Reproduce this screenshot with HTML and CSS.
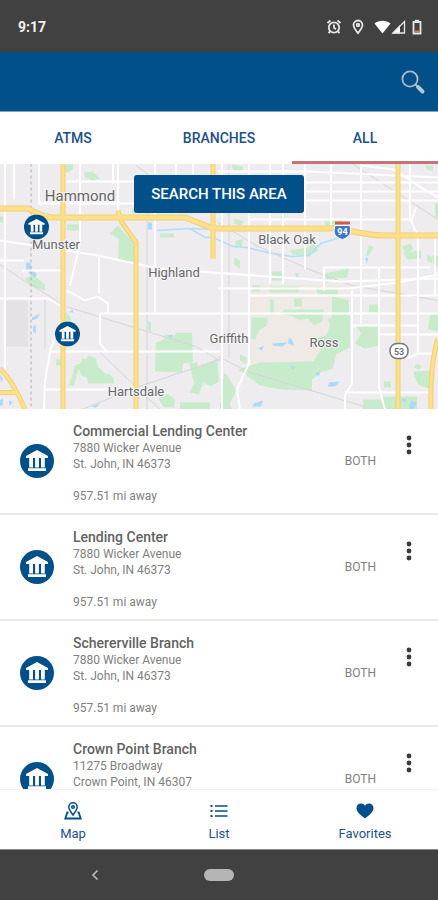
FILE: index.html
```html
<!DOCTYPE html>
<html lang="en">

<head>
  <meta charset="UTF-8" />
  <meta name="viewport" content="width=device-width, initial-scale=1.0" />
  <title>Locations</title>
  <link rel="stylesheet" href="styles.css">
</head>

<body>
  <svg class="symbols" aria-hidden="true">
    <symbol id="bank" viewBox="0 0 34 34">
      <circle cx="17" cy="17" r="17" fill="#02508a" />
      <path fill="#fff" d="M17 6L28 12v2H6v-2zM9.200 14h3.800v9.500H9.200zM15.100 14h3.800v9.500h-3.800zM21 14h3.800v9.500H21zM8 24.300h18v2.700H8z" />
    </symbol>
    <symbol id="dots" viewBox="0 0 6 20">
      <g fill="#3a3a3a"><circle cx="3" cy="3" r="2.400" /><circle cx="3" cy="10" r="2.400" /><circle cx="3" cy="17" r="2.400" /></g>
    </symbol>
  </svg>

  <div class="app">
    <div class="status-bar">
      <span class="time">9:17</span>
      <div class="status-icons">
        <svg class="alarm" width="16" height="16" viewBox="0 0 16 16" fill="none" stroke="#e6e6e6" stroke-width="1.800">
          <circle cx="8" cy="8.500" r="5.200" />
          <path d="M8 5.500v3.300l2 1.400M1.500 4l3-2.500M14.500 4l-3-2.500M4 12.500L2.500 14M12 12.500l1.500 1.500" />
        </svg>
        <svg class="place" width="12" height="16" viewBox="0 0 12 16" fill="none" stroke="#e6e6e6" stroke-width="1.800">
          <path d="M6 14.200C3.500 11 1.500 8.500 1.500 6a4.500 4.500 0 0 1 9 0c0 2.500-2 5-4.500 8.200z" />
          <circle cx="6" cy="6" r="1.300" />
        </svg>
        <svg width="17" height="16" viewBox="0 0 17 16"><path fill="#fff" d="M.500 4.500C5 .800 12 .800 16.500 4.500L8.500 14.500z" /></svg>
        <svg width="15" height="16" viewBox="0 0 15 16"><path fill="#fff" d="M9 6v8.500H.800z" /><path fill="none" stroke="#e6e6e6" stroke-width="1.300" d="M2 14L13.500 2.500V14z" /></svg>
        <svg class="battery" width="10" height="16" viewBox="0 0 10 16">
          <path fill="none" stroke="#e6e6e6" stroke-width="1.800" d="M1.500 3h7v11.500h-7z" />
          <path fill="#e6e6e6" d="M3 .800h4V3H3z" />
          <path fill="#d9804f" d="M3 11.500h4v2H3z" />
        </svg>
      </div>
    </div>

    <header class="header">
      <button class="search-btn" aria-label="Search">
        <svg width="26" height="26" viewBox="0 0 26 26" fill="none">
          <circle cx="10" cy="10" r="7.600" stroke="#a9bccb" stroke-width="1.800" />
          <path d="M15.500 15.500l3 3" stroke="#a9bccb" stroke-width="2" />
          <path d="M18.200 18.200l4.300 4.300" stroke="#b7c6d2" stroke-width="4" stroke-linecap="round" />
        </svg>
      </button>
    </header>

    <nav class="tabs">
      <a href="#atms">ATMS</a>
      <a href="#branches">BRANCHES</a>
      <a href="#all" class="active">ALL</a>
    </nav>

    <div class="map">
      <svg class="map-canvas" viewBox="0 163 438 246" preserveAspectRatio="xMidYMid slice">
        <rect y="163" width="438" height="246" fill="#eeecee" />
        <path fill="#e4e2e5" d="M6 300h22v46H6zM275 351h12v7h-12z" />
        <path fill="#efeae5" d="M251 284h98v60l-20 22h-78z" />

        <!-- parks -->
        <g fill="#c8eccb">
          <path d="M65 164h8v4l-4 4h-4zM84 172l9-1 7 7-8 2-7-3zM67 224h12v6h-12zM110 233l8-8 16 18v20l-16-4 1-20zM0 216h3v6H0zM132 208h4v5h-4zM160 233h14v4h-14z" />
          <path d="M25 278l8-4 12 10v6l-14-4zM66 311l5 6v5h-6zM56 359h6v6h-6zM69 385l6-20 7-3-5 12-3 11zM82 358l4 1 3-4 7 3 2 8 8 8 3-1 5 5v5H88l-1-6-6-2-2-8z" />
          <path d="M148 320l3 2v9l-3-2zM156 342l8-3 1-5 10 1 1-3h16l1 30-10 1-1 9-27-1zM189 363l8-1 1 5 19-9 2 23-8 5-8-4-4 12-9-2 4-10zM158 398l10-5 7 6-1 8h-10zM180 402h30v7h-30z" />
          <path d="M232 164l11 2v6l-10-2zM234 218l11 3-5 4-6-2zM234 257l6 3v8l-6-4zM236 240l7-2-1 8-7 2zM281 216l4-4v8h-5zM324 221l18-2v7h-16zM290 250l18-3 8-6 2 9-10 6-16-2zM272 271h12v9h-12zM295 272l4 1-2 7zM325 273l24-5-2 9-14 1-7 5zM369 244l5 3-6 9-2-1zM402 246l9-3 2 6-7 4zM403 252l18-2v8l-14 1zM435 203h3v14h-3zM425 165h8v6l-6-2zM427 254l5 3v6l-5-3zM432 255h6v12l-5-3z" />
          <path d="M269 286h30v6h-30zM252 285h8v6h-8zM315 287h23v7h-20zM270 298l4 2v14h-4zM294 298h8v8h-8zM252 317h16l-2 9-6 3-5 10h-4zM284 309h40l-2 12-8 4-6-7-9 2-6-4-11-2zM332 296l17 4v18h-17z" />
          <path d="M350 312v35l-14 7-3 14-12 4-9 7v11l-30-1-22-4-22-16 22-7 53-1 9-13-13-2 4-8 13-3 4-10-2-7 15-2zM369 304h10v9h-10zM356 325h24v20l-16 3-9-5 6-10zM430 315l8-4v20l-10-2zM224 372l4 4 8 14-8 17-8-9zM240 354l7 3-1 7-6-4zM384 381h7v6h-7zM417 363l5 3-3 3-5-2zM413 371l19-1-1 19-13-5zM363 399h20v-3h34v13h-54z" />
          <path d="M220 402l8-3 4 10h-12z" />
        </g>

        <!-- water -->
        <g fill="#a9d9fb">
          <path d="M148 222h4v7h-4zM26 262h4l1 6 6 6-2 3-9-7zM32 317l8-4-3 5-5 2zM33 326l3-2v9l-3-2zM69 312l4-3v3zM168 335l5-1-2 3zM0 374l3 4-2 4zM0 400l3-2v7H0zM9 400l4 2-4 3zM91 406l9-3-4 4zM258 348l6-3-2 5zM272 343l16-1-6 4-9-1zM289 337l3 2 2 6-6-2zM290 366h5l-2 3zM315 373l5-2-1 5zM329 382l11-1-5 5h-7zM254 403l9-3-2 6h-9zM365 257l3 1-1 5zM402 398h4v3h-4zM411 400l6 2-4 7h-4z" />
        </g>
        <path fill="none" stroke="#b5dcf8" stroke-width="1.500" d="M157 230l33-2 15 9h8l20 9 14 1 20 5 25 4 17-1 12-12 22-7M192 228l22 1" />

        <!-- railways and county line -->
        <path fill="none" stroke="#d6d4d7" stroke-width="1" d="M352 163l86 56M136 165l12 9-1 60v175M0 264l24 16 42 26 130 40 24 14M218 222l40 24 54 24 40 15 86 15M218 356l32 16 58 17 56 17M100 352l60 57M82 409l54-22 84-28M45 298v50M229 163v194" />
        <path fill="none" stroke="#aeacaf" stroke-width="1" stroke-dasharray="3 3" d="M31 163v246" />

        <!-- streets -->
        <g fill="none" stroke="#fff" stroke-width="2">
          <path d="M5 163v205M14 163v36M39 163v40h96M80 163v80l-10 42M118 163v48M63 181h72M0 240l40 6 58 9 60 13 110 8 74 5 96-3M0 260h24M22 270h40M99 255v38M155 163v150M176 163v50M193 163v14M0 298h48l12 7M67 290l18 10 13-4 10 7v10M438 313H100v30l7 8M50 351h170M63 314l-13 37-5 30-1 28M45 389h91M113 163v20" />
          <path d="M222 163v246M249 163v200l-12 26 3 20M270 163v120M283 163v120M305 163v106M331 163v68M361 163v160M218 171h90l130 6M304 182h134M304 191h134M304 200h134M249 219h164M324 290v-23h106M379 267v120l6 22M360 165l34 4 24 16 20 12M410 163v55l8 18v117l-8 4h-12M352 290v93l-7 12v14M435 235v60M250 295h188M218 288h130l50-6 40-8M352 325h66M380 334h58M345 392h85M412 219l4-12M418 353h16" />
        </g>

        <!-- highways -->
        <g fill="none" stroke="#f2cf72" stroke-width="5">
          <path d="M63 163v246M118 210l4 12 14 20v167M213 163v95M398 163v246M438 338q-8 24-7 71M0 368q14 14 25 41M0 392h15" />
          <path stroke-width="6" d="M0 208h28q12 7 24 9h133l28 11h127q28 7 45 7h53" />
        </g>
        <g fill="none" stroke="#fde08a" stroke-width="3">
          <path d="M63 163v246M118 210l4 12 14 20v167M213 163v95M398 163v246M438 338q-8 24-7 71M0 368q14 14 25 41M0 392h15" />
          <path stroke-width="4" d="M0 208h28q12 7 24 9h133l28 11h127q28 7 45 7h53" />
        </g>

        <!-- road shields -->
        <path fill="#3f78c4" stroke="#fff" stroke-width="1" d="M335 225h15q2 8-2 11-2 2-5.500 3-4-1-6-3-4-3-1.500-11z" />
        <path fill="#d4574e" d="M335 221h15v3h-15z" />
        <text class="shield shield-light" x="342.500" y="234">94</text>
        <rect x="390" y="343" width="18" height="15" rx="7" fill="#fff" stroke="#77787a" stroke-width="1.500" />
        <text class="shield" x="399" y="354">53</text>

        <g class="places">
          <text class="city" x="80" y="200">Hammond</text>
          <text x="56" y="248">Munster</text>
          <text x="174" y="276">Highland</text>
          <text x="287" y="243">Black Oak</text>
          <text x="229" y="342">Griffith</text>
          <text x="324" y="346">Ross</text>
          <text x="136" y="395">Hartsdale</text>
        </g>

        <use href="#bank" x="24" y="214" width="25" height="25" />
        <use href="#bank" x="55" y="321" width="25" height="25" />
      </svg>
      <button class="search-area">SEARCH THIS AREA</button>
    </div>

    <ul class="list">
      <li class="row">
        <svg class="bank-icon"><use href="#bank" /></svg>
        <div class="details">
          <h2>Commercial Lending Center</h2>
          <p>7880 Wicker Avenue</p>
          <p>St. John, IN 46373</p>
          <p class="distance">957.51 mi away</p>
        </div>
        <span class="type">BOTH</span>
        <button class="more" aria-label="More options"><svg width="6" height="20"><use href="#dots" /></svg></button>
      </li>
      <li class="row">
        <svg class="bank-icon"><use href="#bank" /></svg>
        <div class="details">
          <h2>Lending Center</h2>
          <p>7880 Wicker Avenue</p>
          <p>St. John, IN 46373</p>
          <p class="distance">957.51 mi away</p>
        </div>
        <span class="type">BOTH</span>
        <button class="more" aria-label="More options"><svg width="6" height="20"><use href="#dots" /></svg></button>
      </li>
      <li class="row">
        <svg class="bank-icon"><use href="#bank" /></svg>
        <div class="details">
          <h2>Schererville Branch</h2>
          <p>7880 Wicker Avenue</p>
          <p>St. John, IN 46373</p>
          <p class="distance">957.51 mi away</p>
        </div>
        <span class="type">BOTH</span>
        <button class="more" aria-label="More options"><svg width="6" height="20"><use href="#dots" /></svg></button>
      </li>
      <li class="row">
        <svg class="bank-icon"><use href="#bank" /></svg>
        <div class="details">
          <h2>Crown Point Branch</h2>
          <p>11275 Broadway</p>
          <p>Crown Point, IN 46307</p>
        </div>
        <span class="type">BOTH</span>
        <button class="more" aria-label="More options"><svg width="6" height="20"><use href="#dots" /></svg></button>
      </li>
    </ul>

    <nav class="bottom-nav">
      <a href="#map">
        <svg width="18" height="18" viewBox="0 0 18 18" fill="none" stroke="#02508a" stroke-width="1.500">
          <path d="M9 13C6.500 9.500 4.800 7.500 4.800 5a4.200 4.200 0 0 1 8.400 0c0 2.500-1.700 4.500-4.200 8z" />
          <circle cx="9" cy="5" r="1.300" />
          <path stroke-width="1.800" d="M4.500 10.500H3.300L1.300 16.500h15.400l-2-6h-1.200" />
        </svg>
        Map
      </a>
      <a href="#list">
        <svg width="18" height="18" viewBox="0 0 18 18" fill="#02508a">
          <path d="M.500 3h2v2h-2zM.500 8h2v2h-2zM.500 13h2v2h-2zM5 3.200h12.500v1.600H5zM5 8.200h12.500v1.600H5zM5 13.200h12.500v1.600H5z" />
        </svg>
        List
      </a>
      <a href="#favorites">
        <svg width="18" height="18" viewBox="0 0 18 18" fill="#02508a">
          <path d="M9 16.500C4 12.500.500 9.800.500 6.200.500 3.500 2.500 1.500 5 1.500c1.600 0 3.100.800 4 2.200.900-1.400 2.400-2.200 4-2.200 2.500 0 4.500 2 4.500 4.700 0 3.600-3.500 6.300-8.500 10.300z" />
        </svg>
        Favorites
      </a>
    </nav>

    <div class="system-nav">
      <button aria-label="Back">
        <svg width="8" height="12" viewBox="0 0 8 12" fill="none" stroke="#bbb" stroke-width="1.600"><path d="M6.500 1.500L2 6l4.500 4.500" /></svg>
      </button>
      <button aria-label="Home"><span class="pill"></span></button>
    </div>
  </div>
</body>

</html>
```
FILE: styles.css
```css
* {
  box-sizing: border-box;
}

body {
  margin: 0;
  font-family: Roboto, "Liberation Sans", sans-serif;
  background: #fff;
  color: #808080;
}

button {
  padding: 0;
  border: none;
  background: none;
  font-family: inherit;
  cursor: pointer;
}

a {
  color: #1d4f8c;
  text-decoration: none;
}

svg {
  display: block;
}

.symbols {
  position: absolute;
  width: 0;
  height: 0;
}

.app {
  display: flex;
  flex-direction: column;
  height: 100vh;
}

/* status bar */
.status-bar {
  display: flex;
  flex-shrink: 0;
  align-items: center;
  justify-content: space-between;
  height: 52px;
  padding: 2px 16px 0 18px;
  background: #414141;
}

.time {
  color: #f2f2f2;
  font-size: 14px;
  font-weight: 700;
}

.status-icons {
  display: flex;
}

.alarm,
.place {
  margin-right: 10px;
}

.battery {
  margin-left: 6px;
}

/* header */
.header {
  display: flex;
  flex-shrink: 0;
  align-items: center;
  justify-content: flex-end;
  height: 60px;
  padding: 0 12px;
  background: #02508a;
  border-bottom: 1px solid #7fa3c0;
}

/* tabs */
.tabs {
  display: grid;
  flex-shrink: 0;
  grid-template-columns: repeat(3, 1fr);
  height: 52px;
}

.tabs a {
  padding-top: 3px;
  border-bottom: 3px solid #fff;
  font-size: 14px;
  font-weight: 500;
  line-height: 46px;
  text-align: center;
}

.tabs .active {
  border-bottom-color: #c27478;
}

/* map */
.map {
  position: relative;
  flex-shrink: 0;
  height: 245px;
}

.map-canvas {
  width: 100%;
  height: 100%;
}

.places text {
  fill: #67676a;
  stroke: #f6f5f6;
  stroke-width: 2px;
  paint-order: stroke;
  font-size: 13px;
  text-anchor: middle;
}

.places .city {
  font-size: 15px;
}

.shield {
  fill: #66676a;
  font-size: 9px;
  font-weight: 500;
  text-anchor: middle;
}

.shield-light {
  fill: #fff;
  font-weight: 700;
}

.search-area {
  position: absolute;
  top: 11px;
  left: 50%;
  width: 170px;
  height: 38px;
  transform: translateX(-50%);
  border-radius: 3px;
  background: #02508a;
  color: #fff;
  font-size: 15px;
  font-weight: 500;
  white-space: nowrap;
}

/* locations */
.list {
  flex: 1;
  min-height: 0;
  margin: 0;
  padding: 0;
  overflow: hidden;
  list-style: none;
}

.row {
  display: flex;
  align-items: center;
  height: 106px;
  padding: 0 26px 0 20px;
  border-bottom: 2px solid #e9e9e9;
}

.bank-icon {
  flex-shrink: 0;
  width: 34px;
  height: 34px;
}

.details {
  flex: 1;
  align-self: flex-start;
  padding: 13px 0 0 19px;
}

.details h2,
.details p {
  margin: 0;
  font-size: 12px;
  font-weight: 400;
  line-height: 16px;
}

.details h2 {
  color: #626262;
  font-size: 14px;
  font-weight: 500;
  line-height: 18px;
}

.details .distance {
  margin-top: 16px;
}

.type {
  font-size: 12px;
}

.more {
  align-self: flex-start;
  margin: 26px 0 0 30px;
}

/* bottom navigation */
.bottom-nav {
  display: grid;
  flex-shrink: 0;
  grid-template-columns: repeat(3, 1fr);
  height: 60px;
  border-top: 1px solid #f3f3f3;
  background: #fff;
}

.bottom-nav a {
  display: flex;
  flex-direction: column;
  align-items: center;
  gap: 6px;
  padding-top: 12px;
  font-size: 13px;
  line-height: 16px;
}

.system-nav {
  display: grid;
  flex-shrink: 0;
  grid-template-columns: repeat(3, 1fr);
  height: 51px;
  padding: 0 33px;
  border-top: 1px solid #888;
  background: #414141;
}

.system-nav button {
  display: flex;
  align-items: center;
  justify-content: center;
}

.pill {
  width: 30px;
  height: 12px;
  border-radius: 6px;
  background: #b5b5b5;
}
```
